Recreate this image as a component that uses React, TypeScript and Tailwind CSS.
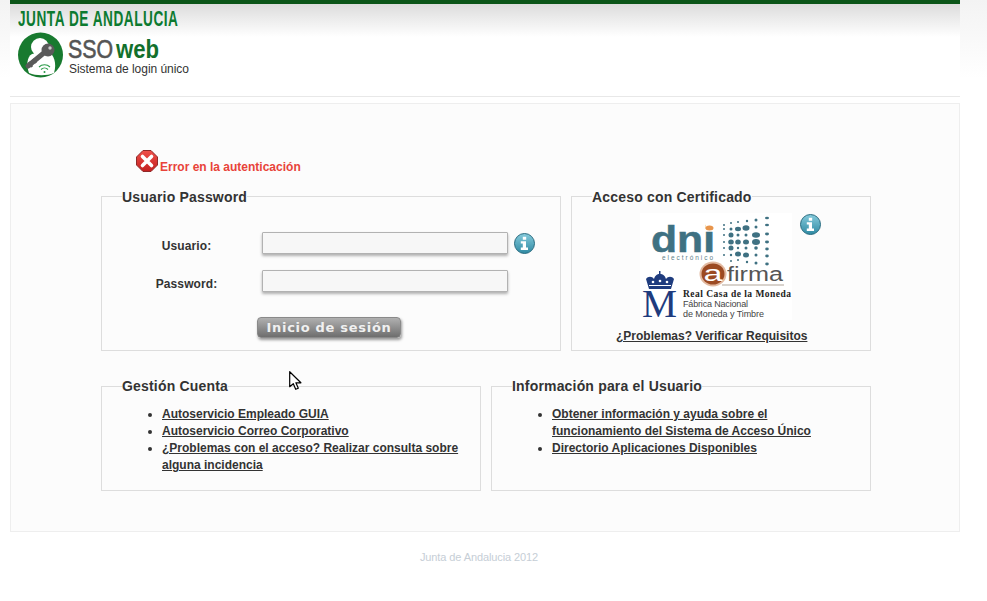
import React from 'react';

const InfoIcon: React.FC = () => (
  <svg width="21" height="21" viewBox="0 0 21 21" className="shrink-0">
    <defs>
      <linearGradient id="infoFill" x1="0" y1="0" x2="0" y2="1">
        <stop offset="0" stopColor="#86cbdc" />
        <stop offset="1" stopColor="#2f8aa3" />
      </linearGradient>
    </defs>
    <circle cx="10.5" cy="10.5" r="10" fill="url(#infoFill)" stroke="#2a6c80" />
    <path d="M8.800 3.800h3.400v3H8.800zM6.800 8.200H12v6.400h2v2.400H6.800v-2.400h2v-4h-2z" fill="#fff" />
  </svg>
);

const ErrorIcon: React.FC = () => (
  <svg width="22" height="22" viewBox="0 0 22 22" className="shrink-0">
    <defs>
      <linearGradient id="errFill" x1="0" y1="0" x2="0" y2="1">
        <stop offset="0" stopColor="#f0504a" />
        <stop offset="1" stopColor="#c21f1f" />
      </linearGradient>
    </defs>
    <path d="M7 .5h8L21.500 7v8L15 21.500H7L.5 15V7z" fill="url(#errFill)" stroke="#8f2a2a" />
    <path d="M6.500 6.500l9 9M15.500 6.500l-9 9" stroke="#fff" strokeWidth="3.600" strokeLinecap="round" />
  </svg>
);

const Cursor: React.FC = () => (
  <svg width="14" height="20" viewBox="0 0 14 20" className="absolute left-[289px] top-[371px]">
    <path d="M.7.7v15l3.600-3 2.400 5.600 2.600-1.100-2.400-5.400h5z" fill="#fff" stroke="#000" strokeWidth="1.200" strokeLinejoin="round" />
  </svg>
);

const Brand: React.FC = () => (
  <svg width="180" height="68" viewBox="0 0 180 68" className="block">
    <text transform="scale(0.62 1)" x="0" y="16" fontFamily="Liberation Sans" fontWeight="700" fontSize="22" fill="#0c7a30" textLength="258" lengthAdjust="spacing">JUNTA DE ANDALUCIA</text>
    <g transform="translate(0 23)">
      <circle cx="22.500" cy="22" r="22.500" fill="#187a2f" />
      <circle cx="22" cy="14" r="9" fill="#fff" />
      <path d="M11 40c-3-8-2-16 3-19l16-3c6 4 9 12 6 22-7 3-18 3-25 0z" fill="#fff" />
      <path d="M10 33l17-14" stroke="#5a5a5a" strokeWidth="5" strokeLinecap="round" />
      <path d="M11 29l3 5M15 26l3 4" stroke="#5a5a5a" strokeWidth="2.500" />
      <circle cx="30" cy="17" r="6.500" fill="#5a5a5a" />
      <circle cx="32" cy="15" r="1.700" fill="#ccc" />
      <path d="M21 34c3-3 8-3 11 0M23 36.500c2-2 5-2 7 0" fill="none" stroke="#2a9a48" strokeWidth="1.100" />
      <circle cx="26.500" cy="39" r="1" fill="#2a9a48" />
    </g>
    <text x="50" y="48" fontFamily="Liberation Sans" fontSize="26" fill="#555" stroke="#555" strokeWidth="0.6" textLength="45" lengthAdjust="spacingAndGlyphs">SSO</text>
    <text x="98" y="48" fontFamily="Liberation Sans" fontWeight="700" fontSize="26" fill="#12702c" textLength="43" lengthAdjust="spacingAndGlyphs">web</text>
    <text x="51" y="63" fontFamily="Liberation Sans" fontSize="12" fill="#333" textLength="120">Sistema de login único</text>
  </svg>
);

const dots: [number, number, number, number][] = [
  [84, 12, 1, 1], [91, 10, 1, 1], [98, 9, 1, 1], [107, 8, 1.200, 1.200], [116, 7, 1.500, 1.500], [127, 5, 2, 1.200],
  [84, 16, 1, 1], [91, 16, 1.500, 1.500], [98, 16, 3, 2.200], [106, 15, 3.500, 2.800], [116, 14, 1.500, 1.500], [127, 12, 2, 1.200],
  [84, 22, 1, 1], [91, 22, 2.500, 2.500], [98, 22, 1.500, 1.500], [106, 22, 1.500, 1.500], [116, 22, 4, 2.800], [127, 21, 2, 1.400],
  [84, 29, 1, 1], [91, 29, 2.800, 2.500], [98, 29, 2.800, 2.500], [106, 29, 3, 2.500], [116, 29, 4, 3], [127, 29, 2, 1.400],
  [84, 35, 1, 1], [91, 35, 2.500, 2.500], [98, 35, 1.200, 1.200], [106, 35, 1.500, 1.500], [116, 35, 1.800, 1.800], [127, 36, 1.800, 1.400],
  [84, 42, 1, 1], [91, 42, 1.200, 1.200], [98, 41, 3, 2.500], [106, 42, 3, 2.500], [116, 42, 1.500, 1.500], [127, 43, 1.800, 1.400],
  [91, 48, 1, 1], [98, 47, 1, 1], [107, 49, 1.200, 1.200], [116, 50, 1.500, 1.500], [127, 51, 1.800, 1.400],
];

const CertLogos: React.FC = () => (
  <svg width="152" height="107" viewBox="0 0 152 107" className="block shrink-0 bg-white">
    <text x="11" y="39" fontFamily="Liberation Sans" fontWeight="700" fontSize="36" fill="#3f7182" stroke="#3f7182" strokeWidth="0.5" textLength="64" lengthAdjust="spacingAndGlyphs">dni</text>
    <rect x="66" y="11" width="9" height="7" fill="#fff" />
    <ellipse cx="69.500" cy="15" rx="4" ry="2.500" fill="#e8954c" />
    <text x="22" y="47" fontFamily="Liberation Sans" fontSize="6.500" fill="#5f7f8a" textLength="51">electrónico</text>
    {dots.map(([cx, cy, rx, ry], i) => (
      <ellipse key={i} cx={cx} cy={cy} rx={rx} ry={ry} fill="#3f7182" />
    ))}
    <ellipse cx="73" cy="61" rx="13.500" ry="12.500" fill="#e2b9a0" />
    <ellipse cx="73" cy="61" rx="11.500" ry="10.500" fill="#9c4a22" />
    <text x="63.500" y="68" fontFamily="Liberation Sans" fontSize="22" fill="#fff" textLength="19" lengthAdjust="spacingAndGlyphs">a</text>
    <text x="87" y="68" fontFamily="Liberation Sans" fontSize="20" fill="#555" textLength="56" lengthAdjust="spacingAndGlyphs">firma</text>
    <rect x="82" y="71" width="62" height="2" fill="#d8d2cc" />
    <path d="M9 76L6 66C8 63 12 63 14 66C15 62 18 61 19 61V58h1.500v3C22 61 25 62 26 66C28 63 32 63 34 66L31 76z" fill="#1f3c7e" />
    <rect x="9" y="72" width="22" height="1" fill="#fff" />
    <circle cx="13" cy="69" r="1.300" fill="#fff" />
    <circle cx="20" cy="68" r="1.300" fill="#fff" />
    <circle cx="27" cy="69" r="1.300" fill="#fff" />
    <text x="2" y="104" fontFamily="Liberation Serif" fontSize="41" fill="#1f3c7e" textLength="35" lengthAdjust="spacingAndGlyphs">M</text>
    <text x="43" y="84" fontFamily="Liberation Serif" fontWeight="700" fontSize="9.500" fill="#222" textLength="108">Real Casa de la Moneda</text>
    <text x="43" y="94" fontFamily="Liberation Sans" fontSize="9" fill="#444" textLength="65">Fábrica Nacional</text>
    <text x="43" y="104" fontFamily="Liberation Sans" fontSize="9" fill="#444" textLength="81">de Moneda y Timbre</text>
  </svg>
);

const Box: React.FC<{ title: string; className: string; legendClass?: string; children: React.ReactNode }> = ({ title, className, legendClass, children }) => (
  <fieldset className={`border border-[#ddd] px-5 min-w-0 ${className}`}>
    <legend className={`text-[14px] leading-4 tracking-[0.18px] font-bold text-[#333] ${legendClass ?? ''}`}>{title}</legend>
    {children}
  </fieldset>
);

const linkClass = 'font-bold underline text-[#333]';
const labelClass = 'w-[129px] pt-[6px] text-center font-bold tracking-[0.1px] text-[#333]';
const inputClass = 'ml-[11px] w-[246px] h-[22px] border border-[#b2b2b2] rounded-[1px] bg-[#f7f7f7] shadow-[0_2px_3px_rgba(0,0,0,0.3)]';

const App: React.FC = () => {
  return (
    <div className="relative w-[987px] h-[601px] overflow-hidden bg-[linear-gradient(#f3f3f3,#ffffff_78px)] font-['Liberation_Sans',Arial,sans-serif] text-[12px] leading-[17px] text-[#333]">
      <div className="ml-[10px] w-[950px]">
        {/* Header */}
        <div className="h-[97px] border-t-4 border-b border-t-[#0b5518] border-b-[#e8e8e8] bg-[linear-gradient(#dcdcdc,#ffffff_33px)] pl-2 pt-[6px]">
          <Brand />
        </div>

        {/* Main panel */}
        <div className="mt-[6px] h-[429px] border border-[#eeeeee] bg-[#fcfcfc] pl-[90px] pt-[46px]">
          <div className="ml-[35px] flex items-start gap-[2px] h-[37px]">
            <ErrorIcon />
            <span className="mt-[9px] font-bold text-[#e8433a]">Error en la autenticación</span>
          </div>

          <div className="flex gap-[10px]">
            <Box title="Usuario Password" className="w-[460px] h-[164px]" legendClass="pt-[2px]">
              <div className="mt-[27px] flex items-center h-[22px]">
                <label className={labelClass}>Usuario:</label>
                <input className={inputClass} />
                <span className="ml-[6px]"><InfoIcon /></span>
              </div>
              <div className="mt-[16px] flex items-center h-[22px]">
                <label className={labelClass}>Password:</label>
                <input type="password" className={inputClass} />
              </div>
              <button className="mt-[25px] ml-[135px] block w-[144px] h-[21px] rounded-[4px] border border-[#8a8a8a] bg-[linear-gradient(#b0b0b0,#6e6e6e)] shadow-[1px_2px_3px_rgba(0,0,0,0.4)] font-['DejaVu_Sans',sans-serif] font-bold text-[13px] leading-[18px] tracking-[0.7px] text-[#f0f0f0]">
                Inicio de sesión
              </button>
            </Box>

            <Box title="Acceso con Certificado" className="w-[300px] h-[164px]" legendClass="pt-[2px]">
              <div className="ml-[48px] mt-[8px] flex items-start gap-[8px]">
                <CertLogos />
                <span className="mt-[1px]"><InfoIcon /></span>
              </div>
              <a href="#" className={`ml-[24px] mt-[8px] block ${linkClass}`}>¿Problemas? Verificar Requisitos</a>
            </Box>
          </div>

          <div className="mt-[27px] flex gap-[10px]">
            <Box title="Gestión Cuenta" className="w-[380px] h-[113px]">
              <ul className="list-disc pl-10 mt-[12px]">
                <li><a href="#" className={linkClass}>Autoservicio Empleado GUIA</a></li>
                <li><a href="#" className={linkClass}>Autoservicio Correo Corporativo</a></li>
                <li><a href="#" className={linkClass}>¿Problemas con el acceso? Realizar consulta sobre alguna incidencia</a></li>
              </ul>
            </Box>
            <Box title="Información para el Usuario" className="w-[380px] h-[113px]">
              <ul className="list-disc pl-10 mt-[12px]">
                <li><a href="#" className={linkClass}>Obtener información y ayuda sobre el funcionamiento del Sistema de Acceso Único</a></li>
                <li><a href="#" className={linkClass}>Directorio Aplicaciones Disponibles</a></li>
              </ul>
            </Box>
          </div>
        </div>

        {/* Footer */}
        <div className="mt-[18px] pr-3 text-center text-[11px] leading-[14px] tracking-[-0.1px] text-[#c6ced6]">Junta de Andalucia 2012</div>
      </div>

      <Cursor />
    </div>
  );
};

export default App;
